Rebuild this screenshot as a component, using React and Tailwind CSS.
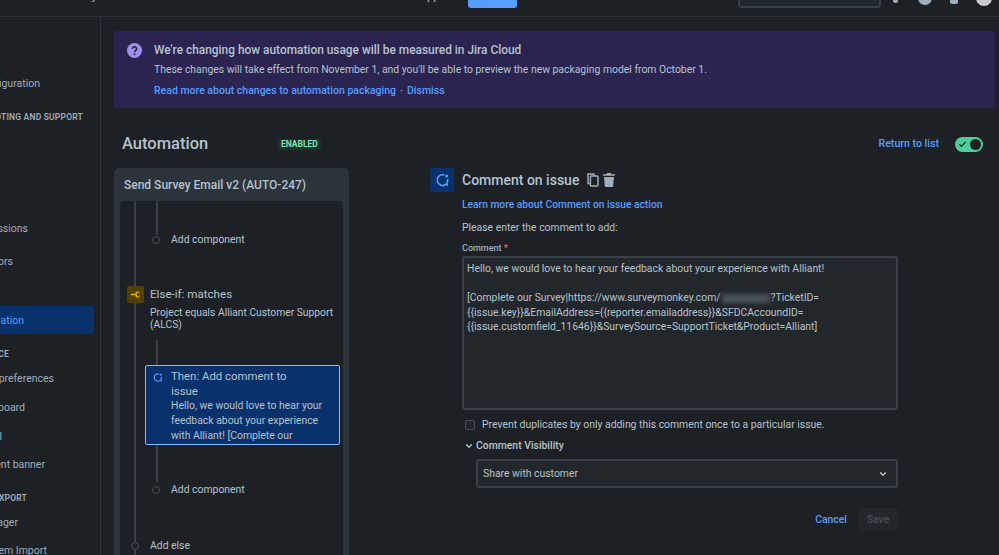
import React from "react";
import { Check, ChevronDown } from "lucide-react";

function SideRow({ w, active, children }) {
  return <div className={`flex h-7 justify-end items-center whitespace-nowrap text-[10.5px] ${w} ${active ? "bg-[#09326c] text-[#579dff] rounded-r-[3px]" : "text-[#9fadbc]"}`}>{children}</div>;
}
function SideHead({ w, children }) {
  return <div className={`flex h-4 justify-end items-center whitespace-nowrap text-[8.5px] font-semibold tracking-[0.2px] text-[#9fadbc] ${w}`}>{children}</div>;
}
function CommentIcon({ className }) {
  return (
    <svg viewBox="0 0 24 24" fill="none" className={className}>
      <path d="M14.5 4.300A8 8 0 1 0 18 18.200l2 1.300-.6-3.200a8 8 0 0 0 1.200-5" stroke="currentColor" strokeWidth="2.400" strokeLinecap="round" strokeLinejoin="round" />
      <circle cx="19" cy="6" r="2.400" fill="currentColor" />
    </svg>
  );
}
function Dot({ className = "" }) {
  return <span className={`block size-2 rounded-full border-[1.5px] border-[#454f59] bg-[#1d2125] ${className}`} />;
}

export default function App() {
  return (
    <div className="h-[555px] w-[999px] overflow-hidden bg-[#1d2125] font-['Roboto',sans-serif] text-[#b6c2cf] flex flex-col">
      <header className="h-[17px] shrink-0 border-b border-[#2c333a] flex items-start overflow-hidden">
        <span className="w-[97px] mt-[-11px] flex justify-end whitespace-nowrap text-[11px] text-[#9fadbc] font-medium">Recently</span>
        <span className="w-[348px] mt-[-11px] flex justify-end whitespace-nowrap text-[11px] text-[#9fadbc] font-medium">Apps</span>
        <div className="ml-[23px] h-[7.5px] w-[49px] bg-[#579dff] rounded-b-[3px]" />
        <div className="ml-[221px] h-[7.5px] w-[143px] rounded-b-[4px] border-x-2 border-b-2 border-[#38414a] bg-[#22272b]" />
        <span className="ml-[12px] mt-[-2px] block size-[5px] rounded-full bg-[#9fadbc]" />
        <span className="ml-[20px] mt-[-9px] block size-[14px] rounded-full bg-[#9fadbc]" />
        <span className="ml-[18px] mt-[-4px] block size-[8px] rounded-[2px] bg-[#9fadbc]" />
        <span className="ml-[18px] mt-[-10px] block size-[16px] rounded-full bg-[#c9c9c9]" />
      </header>
      <div className="flex flex-1 min-h-0">
        <aside className="w-[101px] shrink-0 border-r border-[#2c333a] pt-[53px] overflow-hidden">
          <SideRow w="w-[40px]">Configuration</SideRow>
          <div className="mt-[11px]"><SideHead w="w-[83px]">TROUBLESHOOTING AND SUPPORT</SideHead></div>
          <div className="mt-[90px]"><SideRow w="w-[28px]">Permissions</SideRow></div>
          <div className="mt-[5px]"><SideRow w="w-[13px]">Validators</SideRow></div>
          <div className="mt-[30px]"><SideRow w="w-[94px]" active><span className="mr-[70px] mt-[2px]">Automation</span></SideRow></div>
          <div className="mt-[12px]"><SideHead w="w-[9px]">PREFERENCE</SideHead></div>
          <div className="mt-[3px]"><SideRow w="w-[54px]">Notification preferences</SideRow></div>
          <div className="mt-[1px]"><SideRow w="w-[25px]">Dashboard</SideRow></div>
          <div className="mt-[1px]"><SideRow w="w-[2px]">Portal</SideRow></div>
          <SideRow w="w-[45px]">Announcement banner</SideRow>
          <div className="mt-[11px]"><SideHead w="w-[27px]">IMPORT AND EXPORT</SideHead></div>
          <div className="mt-[3px]"><SideRow w="w-[18px]">Manager</SideRow></div>
          <SideRow w="w-[47px]">System Import</SideRow>
        </aside>
        <main className="flex-1 min-w-0 pl-[13px] pr-[4px] pt-[14px]">
          <section className="h-[77px] rounded-[3px] bg-[#2b2451] flex pl-[13px] pt-[11px]">
            <svg viewBox="0 0 16 16" className="size-[15px] mt-[1px] shrink-0 text-[#9f8fef]">
              <circle cx="8" cy="8" r="8" fill="currentColor" />
              <path d="M5.800 6.200a2.200 2.200 0 1 1 3.300 1.900c-.7.4-1.100.8-1.100 1.600" stroke="#1d2125" strokeWidth="1.700" fill="none" />
              <circle cx="8" cy="12" r="1" fill="#1d2125" />
            </svg>
            <div className="ml-[12px] flex flex-col">
              <div className="text-[11.9px] font-medium leading-[16px]">We're changing how automation usage will be measured in Jira Cloud</div>
              <div className="mt-[4px] text-[10.4px] leading-[16px]">These changes will take effect from November 1, and you'll be able to preview the new packaging model from October 1.</div>
              <div className="mt-[4.5px] text-[10.5px] leading-[16px] font-medium text-[#579dff]">Read more about changes to automation packaging<span className="mx-[4px] text-[#9fadbc]">·</span>Dismiss</div>
            </div>
          </section>
          <div className="flex items-center h-[24px] mt-[24px] pl-[8px]">
            <h1 className="w-[156px] text-[16.5px] font-medium text-[#b6c2cf]">Automation</h1>
            <span className="h-[11px] px-[3px] rounded-[2px] bg-[#1c3329] text-[#7ee2b8] text-[8.5px] font-bold leading-[11px]">ENABLED</span>
            <span className="ml-auto text-[10.6px] font-medium text-[#579dff]">Return to list</span>
            <div className="ml-[16px] mr-[12px] w-[28px] h-[15px] rounded-full bg-[#4bce97] flex items-center justify-between pl-[3px] pr-[2px]">
              <Check className="size-[9px] text-[#1d2125]" strokeWidth={3} />
              <span className="block size-[11px] rounded-full bg-[#1d2125]" />
            </div>
          </div>
          <div className="flex mt-[12px]">
            <section className="w-[235px] h-[400px] shrink-0 rounded-t-[5px] bg-[#2c333a] px-[6px]">
              <h2 className="h-[33px] pl-[4px] flex items-center text-[12px] font-medium">Send Survey Email v2 (AUTO-247)</h2>
              <div className="relative h-[360px] rounded-t-[4px] bg-[#1d2125] text-[10.4px] flex flex-col">
                <span className="absolute left-[14px] top-0 h-full w-[1.5px] bg-[#38414a]" />
                <div className="ml-[36px] h-[34px] w-[1.5px] bg-[#38414a]" />
                <div className="relative mt-[-3px] h-[16px] pl-[51px] flex items-center">
                  <Dot className="absolute left-[32px] top-[4px]" />Add component
                </div>
                <div className="relative mt-[38px] pl-[30px]">
                  <span className="absolute left-[7px] top-0 size-[17px] rounded-[2px] bg-[#533f04] text-[#e2b203] flex items-center justify-center">
                    <svg viewBox="0 0 16 16" fill="none" className="size-[11px]" stroke="currentColor" strokeWidth="2" strokeLinecap="round">
                      <path d="M2 8h7M13 4.500h-2.500A1.500 1.500 0 0 0 9 6v4a1.500 1.500 0 0 0 1.500 1.500H13" />
                    </svg>
                  </span>
                  <div className="text-[11.6px] leading-[16px]">Else-if: matches</div>
                  <div className="mt-[5px] text-[10.3px] leading-[12px] whitespace-nowrap">Project equals Alliant Customer Support</div>
                  <div className="text-[10.3px] leading-[12px]">(ALCS)</div>
                </div>
                <div className="ml-[36px] mt-[9px] w-[1.5px] h-[25px] bg-[#38414a]" />
                <div className="ml-[25px] w-[195px] h-[80px] shrink-0 rounded-[2px] border-[1.5px] border-[#85b8ff] bg-[#09326c] flex pl-[6px] pt-[3px]">
                  <CommentIcon className="size-[11px] mt-[3px] shrink-0 text-[#579dff]" />
                  <div className="ml-[8px] whitespace-nowrap">
                    <div className="text-[11.4px] leading-[14.5px]">Then: Add comment to</div>
                    <div className="text-[11.4px] leading-[14.5px]">issue</div>
                    <div className="leading-[15px]">Hello, we would love to hear your</div>
                    <div className="leading-[15px]">feedback about your experience</div>
                    <div className="leading-[15px]">with Alliant! [Complete our</div>
                  </div>
                </div>
                <div className="ml-[36px] w-[1.5px] h-[37px] bg-[#38414a]" />
                <div className="relative h-[16px] pl-[51px] flex items-center">
                  <Dot className="absolute left-[32px] top-[4px]" />Add component
                </div>
                <div className="relative mt-[40px] h-[16px] pl-[30px] flex items-center">
                  <Dot className="absolute left-[11px] top-[4px]" />Add else
                </div>
              </div>
            </section>
            <section className="ml-[81px] w-[468px] shrink-0 text-[10.4px]">
              <div className="flex items-center h-[24px]">
                <span className="size-[24px] rounded-[2px] bg-[#09326c] text-[#579dff] flex items-center justify-center">
                  <CommentIcon className="size-[16px]" />
                </span>
                <h2 className="ml-[8px] text-[14px] font-medium">Comment on issue</h2>
                <svg viewBox="0 0 12 14" className="ml-[8px] w-[12px] h-[14px] text-[#9fadbc]" fill="none" stroke="currentColor" strokeWidth="1.500">
                  <path d="M2.800 10.500H1V1h6v1.400" />
                  <rect x="3.400" y="3" width="7.600" height="10" rx="1" />
                </svg>
                <svg viewBox="0 0 12 14" className="ml-[4px] w-[12px] h-[14px] text-[#9fadbc]" fill="currentColor">
                  <path d="M4 0h4l.6 1.200H12v1.600H0V1.200h3.400zM1 4h10l-.8 9a1 1 0 0 1-1 1H2.800a1 1 0 0 1-1-1z" />
                </svg>
              </div>
              <div className="pl-[32px]">
                <a className="block mt-[5px] text-[10.25px] leading-[16px] font-medium text-[#579dff]">Learn more about Comment on issue action</a>
                <p className="mt-[7px] leading-[16px]">Please enter the comment to add:</p>
                <div className="mt-[5px] h-[14px] leading-[14px] text-[9px] font-medium text-[#9fadbc]">Comment<span className="text-[#f87168]"> *</span></div>
                <div className="mt-[1px] w-[436px] h-[154px] rounded-[3px] border-2 border-[#38414a] bg-[#22272b] pl-[3px] pt-[4px] leading-[14.5px] whitespace-nowrap">
                  <div>Hello, we would love to hear your feedback about your experience with Alliant!</div>
                  <div className="h-[14.5px]" />
                  <div>[Complete our Survey|https://www.surveymonkey.com/<span className="inline-block align-middle mx-[1px] w-[48px] h-[9px] bg-[#4a525a] blur-[2px]" />?TicketID=</div>
                  <div>{"{{issue.key}}&EmailAddress={{reporter.emailaddress}}&SFDCAccoundID="}</div>
                  <div>{"{{issue.customfield_11646}}&SurveySource=SupportTicket&Product=Alliant]"}</div>
                </div>
                <label className="ml-[3px] mt-[7px] h-[16px] flex items-center">
                  <span className="block size-[10px] rounded-[2px] border-[1.5px] border-[#454f59] bg-[#22272b]" />
                  <span className="ml-[7px]">Prevent duplicates by only adding this comment once to a particular issue.</span>
                </label>
                <div className="ml-[2px] mt-[5px] h-[16px] flex items-center font-medium">
                  <ChevronDown className="size-[10px] text-[#b6c2cf]" strokeWidth={3} />
                  <span className="ml-[2px]">Comment Visibility</span>
                </div>
                <div className="ml-[14px] mt-[5px] w-[422px] h-[29px] rounded-[3px] border-2 border-[#38414a] bg-[#22272b] flex items-center pl-[5px] pr-[8px]">
                  Share with customer
                  <ChevronDown className="ml-auto size-[10px] text-[#b6c2cf]" strokeWidth={3} />
                </div>
                <div className="mt-[20px] flex items-center justify-end font-medium">
                  <span className="text-[#579dff]">Cancel</span>
                  <span className="ml-[11px] w-[40px] h-[23px] rounded-[3px] bg-[#22272b] text-[#454f59] flex items-center justify-center">Save</span>
                </div>
              </div>
            </section>
          </div>
        </main>
      </div>
    </div>
  );
}
